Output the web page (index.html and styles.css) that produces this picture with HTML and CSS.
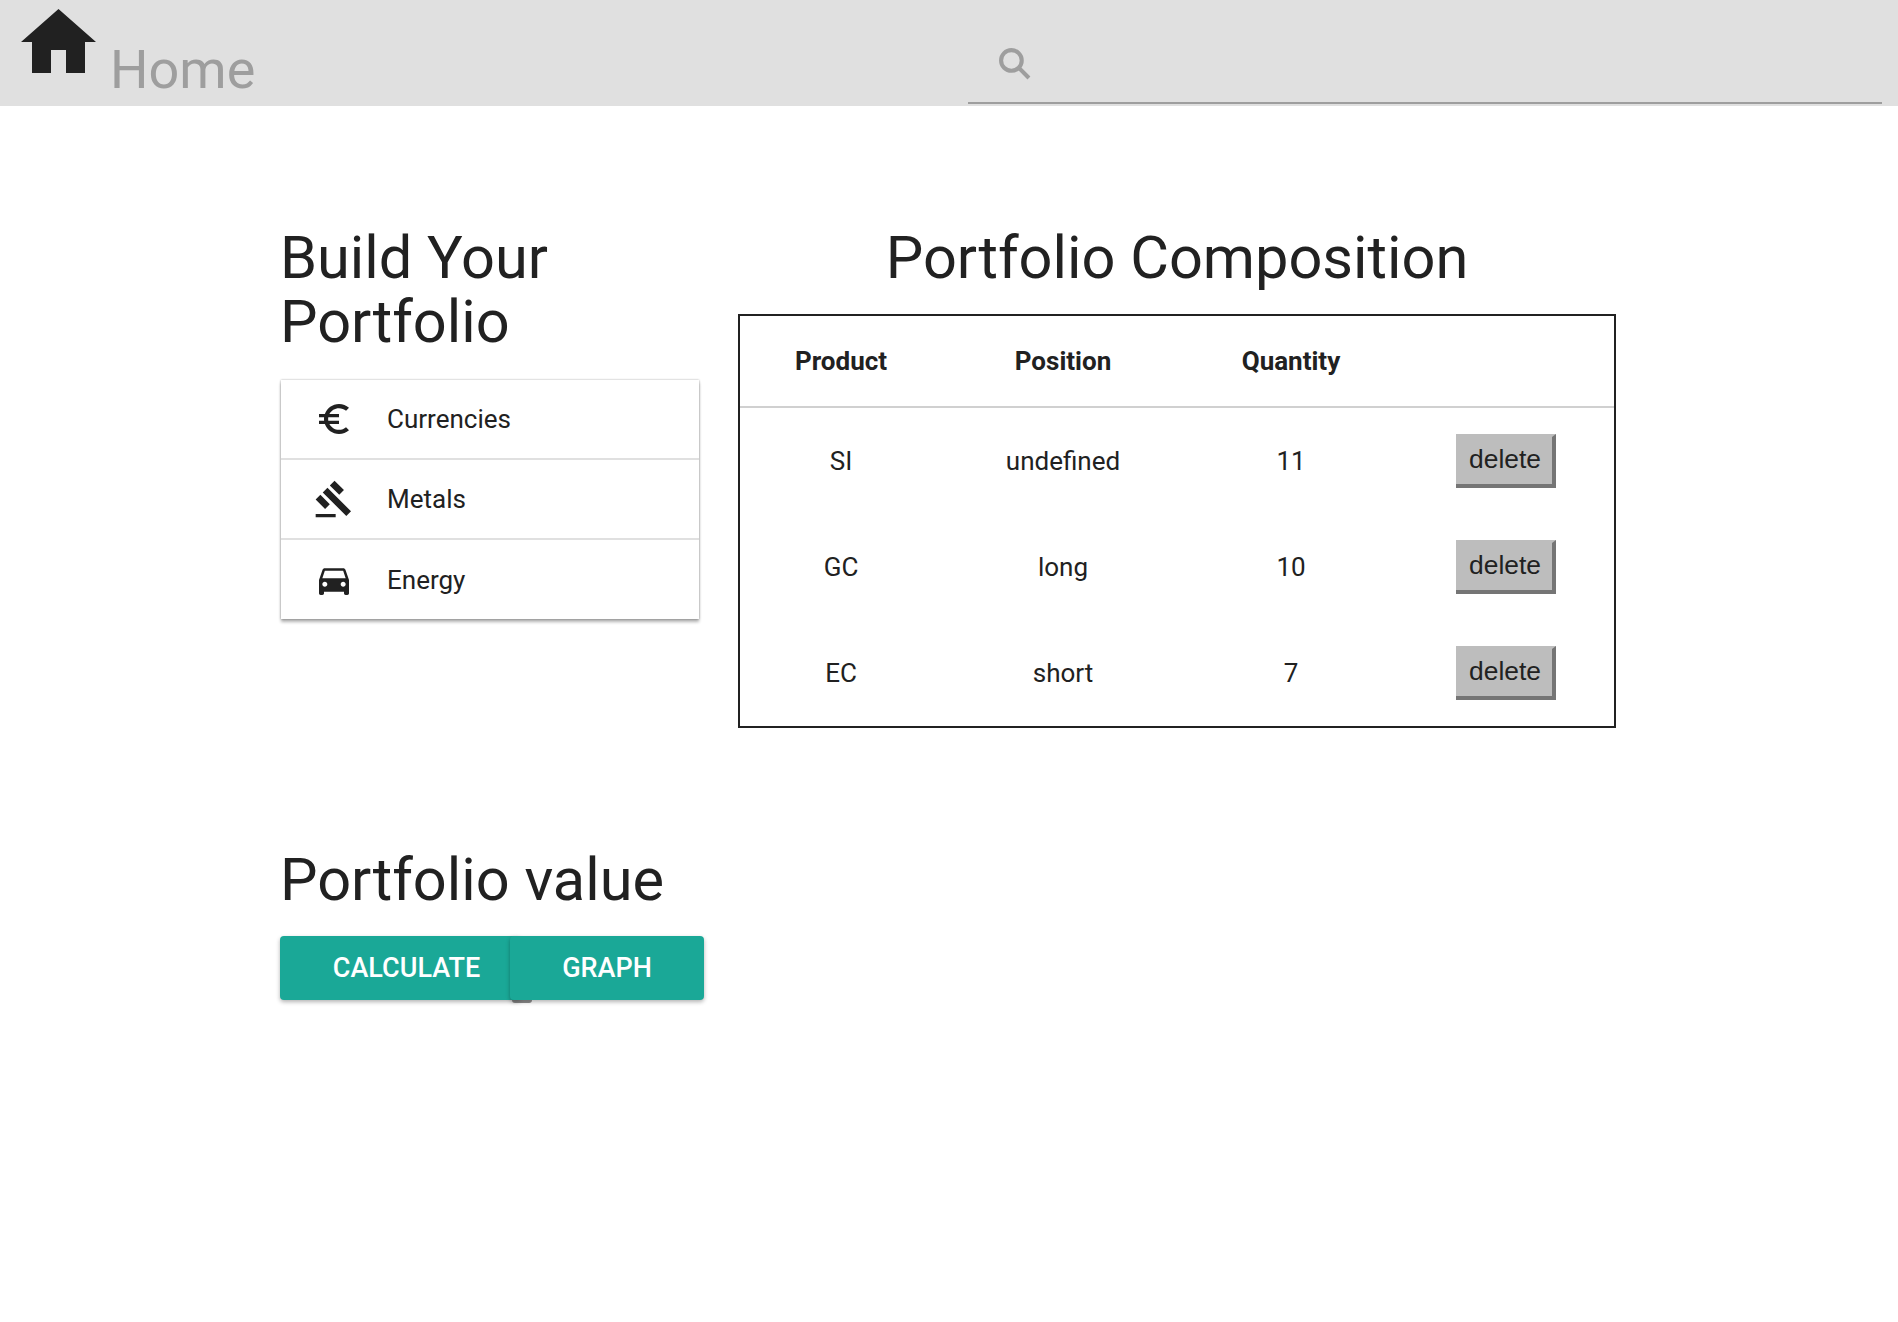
FILE: index.html
```html
<!DOCTYPE html>
<html lang="en">
<head>
<meta charset="utf-8">
<title>Home</title>
<link rel="stylesheet" href="styles.css">
</head>
<body>
<header class="topbar">
  <div class="brand">
    <svg class="home-icon" viewBox="0 0 75 64" aria-hidden="true"><path d="M37.5 0 75 33H64V64H45V41H30V64H11V33H0Z"/></svg>
    <span class="brand-text">Home</span>
  </div>
  <div class="search">
    <svg class="search-icon" viewBox="0 0 32 32" aria-hidden="true"><circle cx="13" cy="13" r="10" /><path d="M20.500 20.500 30 30"/></svg>
  </div>
</header>
<main class="page">
  <section class="top-row">
    <div class="build">
      <h1 class="title title-left">Build Your Portfolio</h1>
      <ul class="menu">
        <li class="menu-row">
          <svg class="menu-icon" viewBox="0 0 24 24" aria-hidden="true"><path d="M15 18.500c-2.510 0-4.680-1.420-5.760-3.500H15v-2H8.580c-.05-.33-.08-.66-.08-1s.03-.67.08-1H15V9H9.240C10.320 6.920 12.500 5.500 15 5.500c1.610 0 3.090.59 4.230 1.570L21 5.300C19.410 3.870 17.300 3 15 3c-3.920 0-7.240 2.510-8.480 6H3v2h3.060c-.04.330-.06.660-.06 1s.02.67.06 1H3v2h3.520c1.240 3.490 4.560 6 8.480 6 2.310 0 4.410-.870 6-2.300l-1.780-1.770c-1.130.98-2.600 1.570-4.220 1.570z"/></svg>
          <span>Currencies</span>
        </li>
        <li class="menu-row">
          <svg class="menu-icon" viewBox="0 0 24 24" aria-hidden="true"><path d="M1 21h12v2H1zM5.245 8.070l2.830-2.827 14.140 14.142-2.828 2.828zM12.317 1l5.657 5.656-2.830 2.830-5.654-5.660zM3.825 9.485l5.657 5.657-2.828 2.828-5.657-5.657z"/></svg>
          <span>Metals</span>
        </li>
        <li class="menu-row">
          <svg class="menu-icon" viewBox="0 0 24 24" aria-hidden="true"><path d="M18.920 6.010C18.720 5.420 18.160 5 17.500 5h-11c-.66 0-1.210.42-1.420 1.010L3 12v8c0 .55.45 1 1 1h1c.55 0 1-.45 1-1v-1h12v1c0 .55.45 1 1 1h1c.55 0 1-.45 1-1v-8l-2.080-5.990zM6.500 16c-.83 0-1.500-.67-1.500-1.500S5.670 13 6.500 13s1.500.67 1.500 1.500S7.330 16 6.500 16zm11 0c-.83 0-1.500-.67-1.500-1.500s.67-1.500 1.500-1.500 1.500.67 1.500 1.500-.67 1.500-1.500 1.500zM5 11l1.500-4.500h11L19 11H5z"/></svg>
          <span>Energy</span>
        </li>
      </ul>
    </div>
    <div class="composition">
      <h1 class="title title-center">Portfolio Composition</h1>
      <table class="positions">
        <thead>
          <tr><th class="col-product">Product</th><th class="col-position">Position</th><th class="col-quantity">Quantity</th><th class="col-action"></th></tr>
        </thead>
        <tbody>
          <tr><td>SI</td><td>undefined</td><td>11</td><td><button class="delete" type="button">delete</button></td></tr>
          <tr><td>GC</td><td>long</td><td>10</td><td><button class="delete" type="button">delete</button></td></tr>
          <tr><td>EC</td><td>short</td><td>7</td><td><button class="delete" type="button">delete</button></td></tr>
        </tbody>
      </table>
    </div>
  </section>
  <section class="value">
    <h1 class="title title-left">Portfolio value</h1>
    <div class="actions">
      <button class="action action-calc" type="button">CALCULATE</button>
      <button class="action action-graph" type="button">GRAPH</button>
    </div>
  </section>
</main>
</body>
</html>
```
FILE: styles.css
```css
* { box-sizing: border-box; }
html, body { margin: 0; padding: 0; background: #fff; }
body { font-family: Roboto, "Liberation Sans", sans-serif; color: #212121; height: 1322px; overflow: hidden; }

.topbar { height: 106px; background: #e0e0e0; display: flex; align-items: stretch; justify-content: space-between; padding-right: 16px; }
.brand { display: flex; align-items: flex-start; padding: 9px 0 0 21px; }
.home-icon { width: 75px; height: 64px; fill: #212121; display: block; }
.brand-text { font-size: 54px; line-height: 60px; color: #9e9e9e; margin: 31px 0 0 14px; }
.search { width: 914px; height: 104px; border-bottom: 2px solid #9e9e9e; padding: 47px 0 0 30px; }
.search-icon { width: 33px; height: 33px; fill: none; stroke: #9e9e9e; stroke-width: 4; display: block; }

.page { padding: 120px 0 0 281px; }
.top-row { display: flex; align-items: flex-start; gap: 39px; }
.title { margin: 0; font-weight: 400; font-size: 59.5px; line-height: 64px; color: #212121; }
.title-left { margin-left: -1px; }
.title-center { text-align: center; }
.build { width: 418px; }
.build .title { width: 340px; }
.menu { list-style: none; margin: 26px 0 0; padding: 0; width: 418px; background: #fff; box-shadow: 0 3px 3px rgba(0,0,0,.3), 0 0 2px rgba(0,0,0,.35); }
.menu-row { height: 80px; display: flex; align-items: center; font-size: 26px; padding-left: 33px; border-bottom: 2px solid #e0e0e0; }
.menu-row:last-child { height: 79px; border-bottom: 0; }
.menu-icon { width: 40px; height: 40px; fill: #212121; margin-right: 33px; display: block; flex: none; }

.composition { width: 878px; }
.positions { margin-top: 24px; width: 878px; height: 414px; border: 2px solid #212121; border-collapse: separate; border-spacing: 0; table-layout: fixed; font-size: 26px; }
.positions th { height: 92px; font-weight: 700; font-size: 26px; text-align: center; border-bottom: 2px solid #d0d0d0; padding: 0; }
.positions td { height: 106px; text-align: center; padding: 0; }
.col-product { width: 202px; }
.col-position { width: 242px; }
.col-quantity { width: 214px; }
.delete { width: 100px; height: 54px; padding: 0 0 2px 2px; font-family: "Liberation Sans", Arial, sans-serif; font-size: 26.4px; color: #212121; background: #bdbdbd; border-style: solid; border-width: 3px 4px 4px 0; border-color: #bdbdbd #757575 #757575 #bdbdbd; }

.value { margin-top: 120px; }
.actions { display: flex; margin: 24px 0 0 -1px; width: 424px; height: 64px; }
.action { height: 64px; border: 0; padding: 0; font-family: Roboto, sans-serif; font-weight: 500; font-size: 27px; color: #fff; background: #1aa897; border-radius: 4px; box-shadow: 0 2px 4px rgba(0,0,0,.3); }
.action-calc { width: 241px; padding-left: 12px; text-align: center; }
.action-graph { width: 194px; margin-left: -11px; position: relative; }
.action-graph::after { content: ""; position: absolute; left: 2px; top: 100%; width: 20px; height: 3px; background: rgba(70,70,70,.65); border-radius: 0 0 8px 8px; }
```
